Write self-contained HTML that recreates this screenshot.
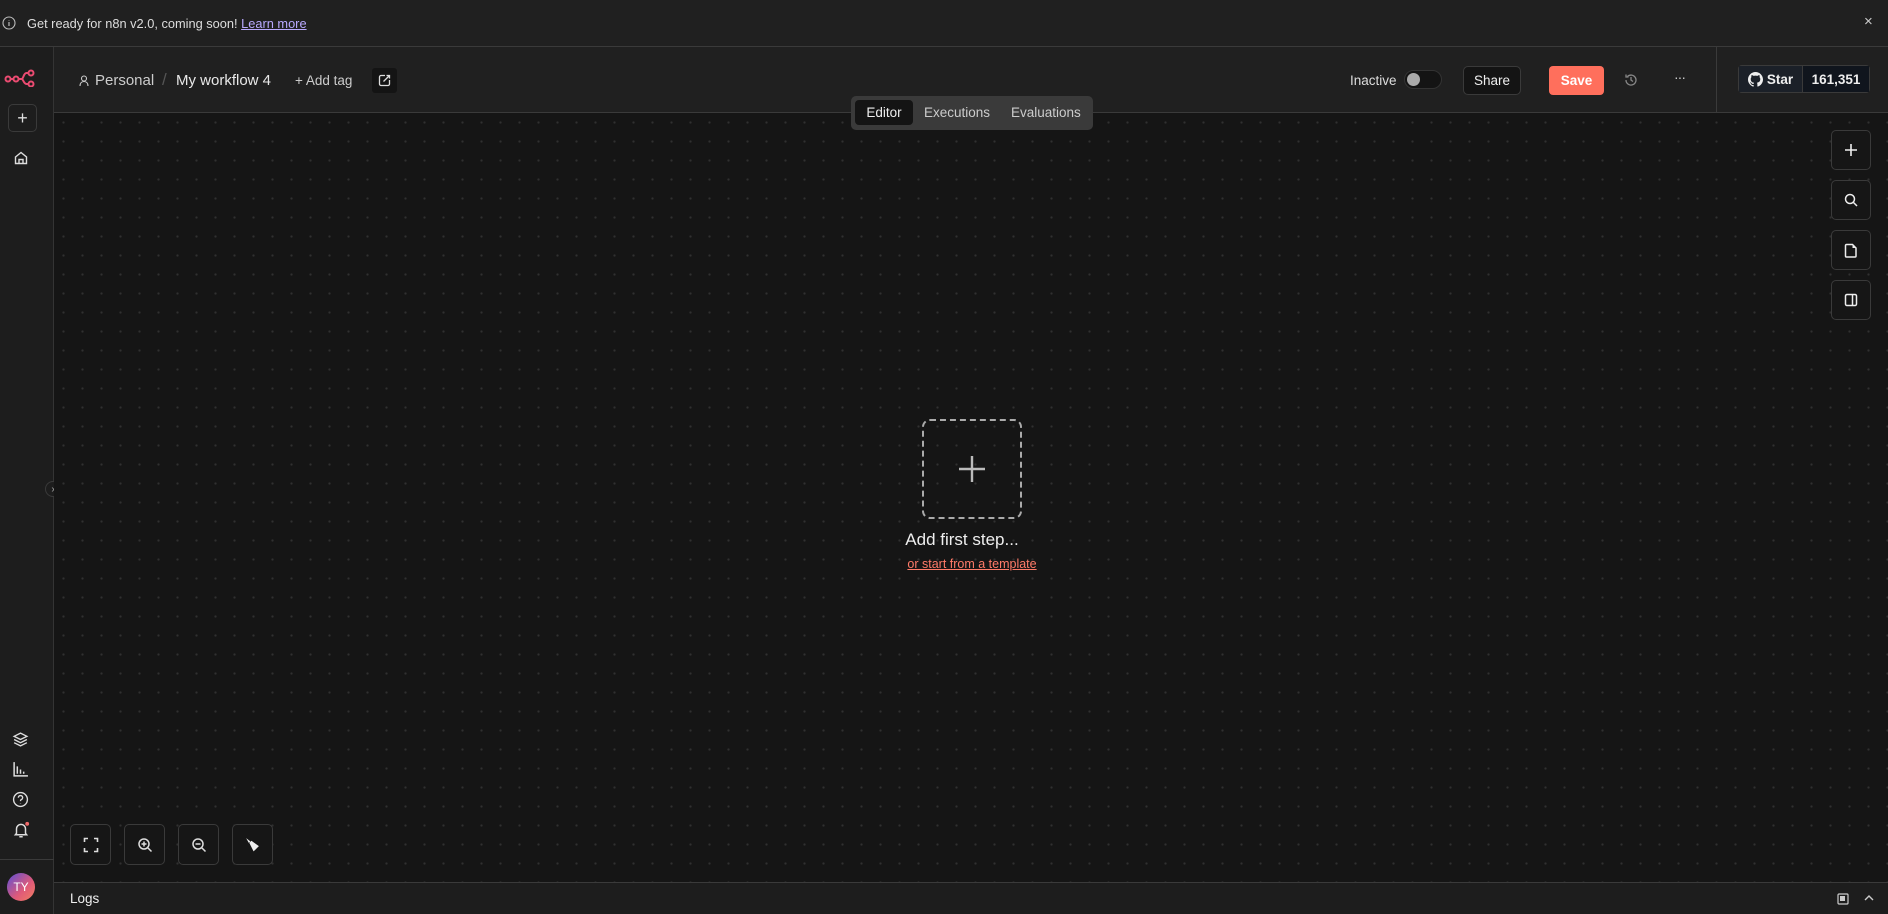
<!DOCTYPE html>
<html><head><meta charset="utf-8"><style>
*{box-sizing:border-box;margin:0;padding:0}
body{width:1888px;height:914px;overflow:hidden;background:#161616;font-family:"Liberation Sans",sans-serif;color:#e6e6e6;position:relative}
.abs{position:absolute}
#banner{left:0;top:0;width:1888px;height:47px;background:#202020;border-bottom:1px solid #3a3a3a;font-size:12.8px;color:#ddd}
#side{left:0;top:47px;width:54px;height:867px;background:#1d1d1d;border-right:1px solid #343434}
#header{left:54px;top:47px;width:1834px;height:66px;background:#202020;border-bottom:1px solid #3a3a3a}
#canvas{left:54px;top:113px;width:1834px;height:769px;background-color:#151515;background-image:radial-gradient(circle,#303030 1px,transparent 1.3px);background-size:19px 19px}
#logs{left:54px;top:882px;width:1834px;height:32px;background:#1d1d1d;border-top:1px solid #3a3a3a}
.btn{position:absolute;border:1px solid #3a3a3a;border-radius:5px;background:#161616;display:flex;align-items:center;justify-content:center}
svg{display:block}
</style></head><body>
<div id="banner" class="abs">
 <svg class="abs" style="left:2px;top:16px" width="14" height="14" viewBox="0 0 14 14"><circle cx="7" cy="7" r="6" fill="none" stroke="#bbb" stroke-width="1.1"/><path d="M7 6v4M7 4v.5" stroke="#bbb" stroke-width="1.2"/></svg>
 <div class="abs" style="left:27px;top:16px">Get ready for n8n v2.0, coming soon! <span style="color:#b9a9ff;text-decoration:underline">Learn more</span></div>
 <div class="abs" style="left:1864px;top:13px;font-size:15px;color:#ccc">×</div>
</div>
<div id="side" class="abs">
 <svg class="abs" style="left:4px;top:22px" width="32" height="18" viewBox="0 0 32 18"><g fill="none" stroke="#ea4b71" stroke-width="2"><circle cx="4" cy="10" r="2.5"/><circle cx="12" cy="10" r="2.5"/><circle cx="27" cy="4" r="2.5"/><circle cx="27" cy="15" r="2.5"/><path d="M6.5 10h3M14.5 10h3c2 0 2-6 5-6h2M17.5 10c2 0 2 5 5 5h2"/></g></svg>
 <div class="btn" style="left:8px;top:57px;width:29px;height:28px;background:#1d1d1d;color:#ddd;font-size:18px">+</div>
 <svg class="abs" style="left:13px;top:103px" width="16" height="16" viewBox="0 0 16 16"><path d="M2.5 7L8 2.5 13.5 7v6.5h-11z M6 13.5V9.5h4v4" fill="none" stroke="#ddd" stroke-width="1.4"/></svg>
 <svg class="abs" style="left:12px;top:684px" width="17" height="17" viewBox="0 0 16 16"><g fill="none" stroke="#ddd" stroke-width="1.3"><path d="M8 2l6 3-6 3-6-3z M2 8l6 3 6-3M2 11l6 3 6-3"/></g></svg>
 <svg class="abs" style="left:12px;top:714px" width="17" height="17" viewBox="0 0 16 16"><path d="M2 1v13h13M5 5v7M8 8v4M11 10v2" fill="none" stroke="#ddd" stroke-width="1.4"/></svg>
 <svg class="abs" style="left:12px;top:744px" width="17" height="17" viewBox="0 0 16 16"><circle cx="8" cy="8" r="6.5" fill="none" stroke="#ddd" stroke-width="1.3"/><path d="M6 6.3a2 2 0 1 1 2.5 1.9c-.5.2-.5.6-.5 1.3M8 11.3v.4" fill="none" stroke="#ddd" stroke-width="1.3"/></svg>
 <svg class="abs" style="left:12px;top:774px" width="18" height="18" viewBox="0 0 16 16"><path d="M4 11V7a4 4 0 0 1 8 0v4l1 1.2H3zM6.5 14h3" fill="none" stroke="#ddd" stroke-width="1.3"/><circle cx="13.5" cy="2.5" r="1.7" fill="#f06a6a"/></svg>
 <div class="abs" style="left:0;top:812px;width:54px;border-top:1px solid #3a3a3a"></div>
 <div class="abs" style="left:7px;top:826px;width:28px;height:28px;border-radius:50%;background:linear-gradient(135deg,#5b4fd8,#e05a78 60%,#f08060);color:#fff;font-size:12px;display:flex;align-items:center;justify-content:center">TY</div>
 <div class="abs" style="left:45px;top:434px;width:16px;height:16px;border-radius:50%;background:#1d1d1d;border:1px solid #3a3a3a;color:#aaa;font-size:10px;display:flex;align-items:center;justify-content:center">›</div>
</div>
<div id="header" class="abs">
 <svg class="abs" style="left:25px;top:28px" width="10" height="12" viewBox="0 0 10 12"><circle cx="5" cy="3.5" r="2.5" fill="none" stroke="#ccc" stroke-width="1.1"/><path d="M1 11c0-3 1.8-4.5 4-4.5s4 1.5 4 4.5" fill="none" stroke="#ccc" stroke-width="1.1"/></svg>
 <div class="abs" style="left:41px;top:25px;font-size:15px;color:#ccc">Personal</div>
 <div class="abs" style="left:108px;top:23px;font-size:17px;color:#555">/</div>
 <div class="abs" style="left:122px;top:25px;font-size:15px;color:#e8e8e8">My workflow 4</div>
 <div class="abs" style="left:241px;top:26px;font-size:13.5px;color:#ccc">+ Add tag</div>
 <div class="abs" style="left:318px;top:21px;width:25px;height:25px;background:#141414;border-radius:3px"></div>
 <svg class="abs" style="left:324px;top:27px" width="13" height="13" viewBox="0 0 13 13"><path d="M7 1.5H3a1.5 1.5 0 0 0-1.5 1.5v7A1.5 1.5 0 0 0 3 11.5h7a1.5 1.5 0 0 0 1.5-1.5V6M5.5 7.5l6-6M8.5 1.5h3v3" fill="none" stroke="#ddd" stroke-width="1.3"/></svg>
 <div class="abs" style="left:1296px;top:26px;font-size:13.5px;color:#ddd">Inactive</div>
 <div class="abs" style="left:1350px;top:23px;width:38px;height:19px;border-radius:10px;background:#141414;border:1px solid #333"></div>
 <div class="abs" style="left:1353px;top:26px;width:13px;height:13px;border-radius:50%;background:#aaa"></div>
 <div class="btn" style="left:1409px;top:19px;width:58px;height:29px;background:#141414;font-size:13.5px;color:#eee">Share</div>
 <div class="abs" style="left:1495px;top:19px;width:55px;height:29px;border-radius:4px;background:#ff6f5c;color:#fff;font-size:13.5px;font-weight:bold;display:flex;align-items:center;justify-content:center">Save</div>
 <svg class="abs" style="left:1570px;top:26px" width="14" height="14" viewBox="0 0 14 14"><path d="M2 7a5 5 0 1 0 1.5-3.5M2 1.5v2.5h2.5M7 4v3l2 1.5" fill="none" stroke="#888" stroke-width="1.3"/></svg>
 <div class="abs" style="left:1620px;top:22px;font-size:14px;color:#ccc;letter-spacing:-1px">···</div>
 <div class="abs" style="left:1662px;top:0;height:65px;border-left:1px solid #3a3a3a"></div>
 <div class="abs" style="left:1684px;top:18px;width:132px;height:28px;border:1px solid #3a3a3a;border-radius:4px;background:#141a22;display:flex;font-size:13.5px;font-weight:bold;color:#eee">
  <div style="width:64px;display:flex;align-items:center;justify-content:center;gap:4px;border-right:1px solid #3a3a3a;background:#1b2028"><svg width="15" height="15" viewBox="0 0 16 16"><path fill="#eee" d="M8 0C3.6 0 0 3.6 0 8c0 3.5 2.3 6.5 5.5 7.6.4.1.5-.2.5-.4v-1.4c-2.200.5-2.7-1-2.7-1-.4-.9-.9-1.200-.9-1.200-.7-.5.1-.5.1-.5.8.1 1.200.8 1.200.8.7 1.200 1.900.9 2.300.7.1-.5.3-.9.5-1.100-1.800-.2-3.600-.9-3.600-4 0-.9.3-1.600.8-2.100-.1-.2-.4-1 .1-2.100 0 0 .7-.2 2.200.8.6-.2 1.300-.3 2-.3s1.400.1 2 .3c1.500-1 2.200-.8 2.200-.8.4 1.100.2 1.900.1 2.100.5.6.8 1.300.8 2.100 0 3.100-1.900 3.700-3.600 3.900.3.3.5.8.5 1.500v2.200c0 .2.1.5.6.4C13.700 14.500 16 11.500 16 8c0-4.400-3.600-8-8-8z"/></svg>Star</div>
  <div style="flex:1;display:flex;align-items:center;justify-content:center;background:#10151d">161,351</div>
 </div>
</div>
<div id="canvas" class="abs">
 <div class="abs" style="left:797px;top:-17px;width:242px;height:34px;background:#3a3a3a;border-radius:5px;font-size:13.5px;color:#ccc">
  <div class="abs" style="left:4px;top:4px;width:58px;height:25px;background:#141414;border-radius:4px;color:#eee;display:flex;align-items:center;justify-content:center">Editor</div>
  <div class="abs" style="left:73px;top:9px">Executions</div>
  <div class="abs" style="left:160px;top:9px">Evaluations</div>
 </div>
 <div class="btn" style="left:1777px;top:17px;width:40px;height:40px"><svg width="14" height="14" viewBox="0 0 14 14"><path d="M7 1v12M1 7h12" stroke="#eee" stroke-width="1.6"/></svg></div>
 <div class="btn" style="left:1777px;top:67px;width:40px;height:40px"><svg width="14" height="14" viewBox="0 0 14 14"><circle cx="6" cy="6" r="4.5" fill="none" stroke="#eee" stroke-width="1.5"/><path d="M9.5 9.5L13 13" stroke="#eee" stroke-width="1.5"/></svg></div>
 <div class="btn" style="left:1777px;top:117px;width:40px;height:40px"><svg width="14" height="15" viewBox="0 0 14 15"><path d="M2.5 1.5h6l3.5 3.5v8a1 1 0 0 1-1 1h-8.5a1 1 0 0 1-1-1v-10.5a1 1 0 0 1 1-1z" fill="none" stroke="#eee" stroke-width="1.5"/><path d="M8.5 1.5v3.5h3.5" fill="#eee"/></svg></div>
 <div class="btn" style="left:1777px;top:167px;width:40px;height:40px"><svg width="14" height="14" viewBox="0 0 14 14"><rect x="1.5" y="1.5" width="11" height="11" rx="1.5" fill="none" stroke="#eee" stroke-width="1.5"/><path d="M8.5 1.5v11" stroke="#eee" stroke-width="1.5"/></svg></div>
 <div class="abs" style="left:868px;top:306px;width:100px;height:100px;border:2px dashed #aaa;border-radius:8px;display:flex;align-items:center;justify-content:center"><svg width="30" height="30" viewBox="0 0 30 30"><path d="M15 2v26M2 15h26" stroke="#bbb" stroke-width="2.4"/></svg></div>
 <div class="abs" style="left:808px;top:417px;width:200px;text-align:center;font-size:17px;color:#eee">Add first step...</div>
 <div class="abs" style="left:818px;top:444px;width:200px;text-align:center;font-size:12.5px;color:#ff7b69;text-decoration:underline">or start from a template</div>
 <div class="btn" style="left:16px;top:711px;width:41px;height:41px"><svg width="16" height="16" viewBox="0 0 16 16"><path d="M1.5 5V1.5H5M11 1.5h3.5V5M14.5 11v3.5H11M5 14.5H1.5V11" fill="none" stroke="#ddd" stroke-width="1.6"/></svg></div>
 <div class="btn" style="left:70px;top:711px;width:41px;height:41px"><svg width="16" height="16" viewBox="0 0 16 16"><circle cx="7" cy="7" r="5" fill="none" stroke="#ddd" stroke-width="1.5"/><path d="M11 11l3.5 3.5M7 4.5v5M4.5 7h5" stroke="#ddd" stroke-width="1.5"/></svg></div>
 <div class="btn" style="left:124px;top:711px;width:41px;height:41px"><svg width="16" height="16" viewBox="0 0 16 16"><circle cx="7" cy="7" r="5" fill="none" stroke="#ddd" stroke-width="1.5"/><path d="M11 11l3.5 3.5M4.5 7h5" stroke="#ddd" stroke-width="1.5"/></svg></div>
 <div class="btn" style="left:178px;top:711px;width:41px;height:41px"><svg width="17" height="17" viewBox="0 0 16 16"><path d="M2 2l4 3-1.5 1.5zM5 6.5l2-2 7 5-5 5z" fill="#eee"/></svg></div>
</div>
<div id="logs" class="abs">
 <div class="abs" style="left:16px;top:8px;font-size:13.5px;color:#eee">Logs</div>
 <svg class="abs" style="left:1783px;top:10px" width="12" height="12" viewBox="0 0 12 12"><rect x="1" y="1" width="10" height="10" rx="1" fill="none" stroke="#ccc" stroke-width="1.2"/><rect x="3" y="3" width="5" height="5" fill="#ccc"/></svg>
 <svg class="abs" style="left:1810px;top:11px" width="10" height="8" viewBox="0 0 10 8"><path d="M1 6l4-4 4 4" fill="none" stroke="#ccc" stroke-width="1.4"/></svg>
</div>
</body></html>
